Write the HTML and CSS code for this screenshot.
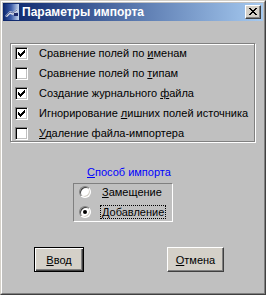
FILE: index.html
```html
<!DOCTYPE html>
<html lang="ru">
<head>
<meta charset="utf-8">
<title>Параметры импорта</title>
<link rel="stylesheet" href="styles.css">
</head>
<body>
<div class="window">
  <div class="frame">
    <div class="titlebar">
      <svg class="app-icon" width="16" height="16" viewBox="0 0 16 16">
        <defs>
          <linearGradient id="ig" x1="0" y1="0" x2="1" y2="0">
            <stop offset="0" stop-color="#0a246a"/>
            <stop offset="0.5" stop-color="#3a5aa8"/>
            <stop offset="1" stop-color="#c8d8f0"/>
          </linearGradient>
        </defs>
        <rect x="0" y="0" width="16" height="16" fill="url(#ig)"/>
        <path d="M2 12 L7 7 L10 8 L14 5 L15 7 L10 11 L7 10 L4 13 Z" fill="#d8dce8"/>
        <path d="M3 12 L7 8 L10 9 L14 6" stroke="#6070a0" stroke-width="1" fill="none"/>
        <rect x="11" y="9" width="4" height="3" fill="#202a6a"/>
      </svg>
      <span class="title">Параметры импорта</span>
      <button class="close" type="button" aria-label="Закрыть">
        <svg width="8" height="7" viewBox="0 0 8 7"><path d="M0 0h2v1h-2zM6 0h2v1h-2zM1 1h2v1h-2zM5 1h2v1h-2zM2 2h4v1h-4zM3 3h2v1h-2zM2 4h4v1h-4zM1 5h2v1h-2zM5 5h2v1h-2zM0 6h2v1h-2zM6 6h2v1h-2z" fill="#000"/></svg>
      </button>
    </div>
    <div class="content">
      <div class="group">
        <label class="check-row"><span class="checkbox checked"></span><span class="check-text">Сравнение полей по <u>и</u>менам</span></label>
        <label class="check-row"><span class="checkbox"></span><span class="check-text">Сравнение полей по <u>т</u>ипам</span></label>
        <label class="check-row"><span class="checkbox checked"></span><span class="check-text">Создание журнального <u>ф</u>айла</span></label>
        <label class="check-row"><span class="checkbox checked"></span><span class="check-text">Игнорирование <u>л</u>ишних полей источника</span></label>
        <label class="check-row"><span class="checkbox"></span><span class="check-text"><u>У</u>даление файла-импортера</span></label>
      </div>
      <div class="mode-label"><u>С</u>пособ импорта</div>
      <div class="radio-group">
        <div class="radio-row"><span class="radio"></span><span class="radio-text"><u>З</u>амещение</span></div>
        <div class="radio-row"><span class="radio selected"></span><span class="radio-text focused"><u>Д</u>обавление</span></div>
      </div>
      <div class="buttons">
        <button class="btn default ok" type="button"><u>В</u>вод</button>
        <button class="btn cancel" type="button"><u>О</u>тмена</button>
      </div>
    </div>
  </div>
</div>
</body>
</html>
```
FILE: styles.css
```css
html, body {
  margin: 0;
  padding: 0;
  background: #c0c0c0;
}
body {
  font-family: "Liberation Sans", Arial, sans-serif;
  font-size: 11px;
  color: #000;
}
.window {
  width: 266px;
  height: 295px;
  box-sizing: border-box;
  border: 1px solid;
  border-color: #d4d0c8 #404040 #404040 #d4d0c8;
}
.frame {
  height: 100%;
  box-sizing: border-box;
  border: 1px solid;
  border-color: #fff #808080 #808080 #fff;
  padding: 1px;
  background: #c0c0c0;
  display: flex;
  flex-direction: column;
}
.titlebar {
  height: 18px;
  flex: none;
  display: flex;
  align-items: center;
  background: linear-gradient(to right, #0a246a 0%, #a6caf0 100%);
  color: #fff;
}
.app-icon {
  display: block;
  margin: 0 3px 0 0;
}
.title {
  flex: 1;
  font-weight: bold;
  font-size: 12px;
  line-height: 18px;
  white-space: nowrap;
}
.close {
  width: 16px;
  height: 14px;
  margin-right: 2px;
  padding: 0;
  box-sizing: border-box;
  background: #d4d0c8;
  border: 1px solid;
  border-color: #fff #404040 #404040 #fff;
  box-shadow: inset -1px -1px 0 #808080;
  display: flex;
  align-items: center;
  justify-content: center;
}
.close svg { display: block; margin: 0 1px 1px 0; }
.content {
  padding: 22px 0 0 7px;
}
.group {
  width: 245px;
  height: 99px;
  box-sizing: border-box;
  border: 1px solid #808080;
  box-shadow: 1px 1px 0 #fff, inset 1px 1px 0 #fff;
  padding: 3px 0 0 4px;
  display: flex;
  flex-direction: column;
  gap: 7px;
}
.check-row {
  display: flex;
  align-items: center;
  height: 13px;
}
.checkbox {
  width: 13px;
  height: 13px;
  box-sizing: border-box;
  border: 1px solid;
  border-color: #808080 #fff #fff #808080;
  box-shadow: inset 1px 1px 0 #000, inset -1px -1px 0 #c0c0c0;
  background: #fff;
  flex: none;
  position: relative;
}
.checkbox.checked::after {
  content: "";
  position: absolute;
  left: 2px;
  top: 2px;
  width: 7px;
  height: 7px;
  background: no-repeat url("data:image/svg+xml;utf8,<svg xmlns='http://www.w3.org/2000/svg' width='7' height='7'><path d='M6 0h1v3h-1zM5 1h1v3h-1zM4 2h1v3h-1zM3 3h1v3h-1zM2 4h1v3h-1zM1 3h1v3h-1zM0 2h1v3h-1z' fill='black'/></svg>");
}
.check-text {
  margin-left: 11px;
  line-height: 13px;
  white-space: nowrap;
}
.mode-label {
  margin: 24px 0 0 77px;
  color: #0000ff;
  line-height: 13px;
}
.radio-group {
  margin: 4px 0 0 63px;
  width: 100px;
  height: 39px;
  box-sizing: border-box;
  border: 1px solid;
  border-color: #808080 #fff #fff #808080;
  padding: 1px 0 0 5px;
  display: flex;
  flex-direction: column;
  gap: 6px;
}
.radio-row {
  display: flex;
  align-items: center;
  height: 14px;
}
.radio {
  width: 12px;
  height: 12px;
  box-sizing: border-box;
  border-radius: 50%;
  border: 1px solid;
  border-color: #808080 #fff #fff #808080;
  box-shadow: inset 1px 1px 0 #404040, inset -1px -1px 0 #d4d0c8;
  background: #fff;
  flex: none;
  position: relative;
}
.radio.selected::after {
  content: "";
  position: absolute;
  left: 3px;
  top: 3px;
  width: 4px;
  height: 4px;
  border-radius: 50%;
  background: #000;
}
.radio-text {
  margin-left: 9px;
  padding: 0 1px;
  border: 1px dotted transparent;
  line-height: 12px;
  white-space: nowrap;
}
.radio-text.focused {
  border-color: #000;
}
.buttons {
  margin: 25px 0 0 24px;
  display: flex;
}
.btn {
  height: 25px;
  box-sizing: border-box;
  background: #d4d0c8;
  font-family: "Liberation Sans", Arial, sans-serif;
  font-size: 11px;
  color: #000;
  padding: 0;
  border: 1px solid;
  border-color: #fff #404040 #404040 #fff;
  box-shadow: inset -1px -1px 0 #808080;
}
.btn.default {
  border: 1px solid #000;
  box-shadow: inset 1px 1px 0 #fff, inset -1px -1px 0 #404040, inset -2px -2px 0 #808080;
}
.ok { width: 50px; }
.cancel { width: 57px; margin-left: 83px; }
```
